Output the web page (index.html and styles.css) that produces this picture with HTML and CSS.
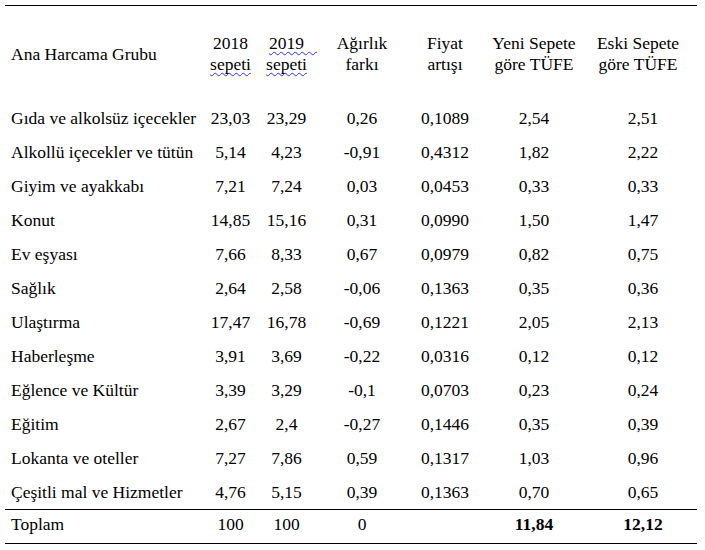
FILE: index.html
```html
<!DOCTYPE html>
<html lang="tr">
<head>
<meta charset="utf-8">
<title>TÜFE Sepet Karşılaştırması</title>
<link rel="stylesheet" href="styles.css">
</head>
<body>
<table class="cpi">
  <colgroup>
    <col class="c-name">
    <col class="c-2018">
    <col class="c-2019">
    <col class="c-diff">
    <col class="c-price">
    <col class="c-new">
    <col class="c-old">
  </colgroup>
  <thead>
    <tr>
      <th class="name">Ana Harcama Grubu</th>
      <th>2018<br><span class="spell">sepeti</span></th>
      <th><span class="spell">2019<span class="tail">&nbsp;&nbsp;&nbsp;</span></span><br><span class="spell">sepeti</span></th>
      <th>Ağırlık<br>farkı</th>
      <th>Fiyat<br>artışı</th>
      <th>Yeni Sepete<br>göre TÜFE</th>
      <th class="last">Eski Sepete<br>göre TÜFE</th>
    </tr>
  </thead>
  <tbody>
    <tr><td class="name">Gıda ve alkolsüz içecekler</td><td>23,03</td><td>23,29</td><td>0,26</td><td>0,1089</td><td>2,54</td><td class="last">2,51</td></tr>
    <tr><td class="name">Alkollü içecekler ve tütün</td><td>5,14</td><td>4,23</td><td>-0,91</td><td>0,4312</td><td>1,82</td><td class="last">2,22</td></tr>
    <tr><td class="name">Giyim ve ayakkabı</td><td>7,21</td><td>7,24</td><td>0,03</td><td>0,0453</td><td>0,33</td><td class="last">0,33</td></tr>
    <tr><td class="name">Konut</td><td>14,85</td><td>15,16</td><td>0,31</td><td>0,0990</td><td>1,50</td><td class="last">1,47</td></tr>
    <tr><td class="name">Ev eşyası</td><td>7,66</td><td>8,33</td><td>0,67</td><td>0,0979</td><td>0,82</td><td class="last">0,75</td></tr>
    <tr><td class="name">Sağlık</td><td>2,64</td><td>2,58</td><td>-0,06</td><td>0,1363</td><td>0,35</td><td class="last">0,36</td></tr>
    <tr><td class="name">Ulaştırma</td><td>17,47</td><td>16,78</td><td>-0,69</td><td>0,1221</td><td>2,05</td><td class="last">2,13</td></tr>
    <tr><td class="name">Haberleşme</td><td>3,91</td><td>3,69</td><td>-0,22</td><td>0,0316</td><td>0,12</td><td class="last">0,12</td></tr>
    <tr><td class="name">Eğlence ve Kültür</td><td>3,39</td><td>3,29</td><td>-0,1</td><td>0,0703</td><td>0,23</td><td class="last">0,24</td></tr>
    <tr><td class="name">Eğitim</td><td>2,67</td><td>2,4</td><td>-0,27</td><td>0,1446</td><td>0,35</td><td class="last">0,39</td></tr>
    <tr><td class="name">Lokanta ve oteller</td><td>7,27</td><td>7,86</td><td>0,59</td><td>0,1317</td><td>1,03</td><td class="last">0,96</td></tr>
    <tr><td class="name">Çeşitli mal ve Hizmetler</td><td>4,76</td><td>5,15</td><td>0,39</td><td>0,1363</td><td>0,70</td><td class="last">0,65</td></tr>
  </tbody>
  <tfoot>
    <tr><td class="name">Toplam</td><td>100</td><td>100</td><td>0</td><td></td><td class="bold">11,84</td><td class="last bold">12,12</td></tr>
  </tfoot>
</table>
</body>
</html>
```
FILE: styles.css
```css
html, body {
  margin: 0;
  padding: 0;
  background: #fff;
}

.cpi {
  border-collapse: collapse;
  table-layout: fixed;
  width: 692px;
  margin: 5px 0 0 5px;
  font-family: "Liberation Serif", "Times New Roman", serif;
  font-size: 17.5px;
  color: #000;
}

.c-name { width: 200px; }
.c-2018 { width: 51px; }
.c-2019 { width: 61px; }
.c-diff { width: 90px; }
.c-price { width: 76px; }
.c-new { width: 102px; }
.c-old { width: 112px; }

.cpi th,
.cpi td {
  padding: 0;
  text-align: center;
  vertical-align: middle;
  white-space: nowrap;
}

.cpi thead th {
  box-sizing: border-box;
  height: 95px;
  padding-top: 2px;
  line-height: 21px;
  font-weight: normal;
  border-top: 1px solid #000;
}

.cpi thead th.last {
  padding-right: 6px;
}

.cpi .name {
  text-align: left;
  padding-left: 6px;
}

.cpi tbody td {
  height: 34px;
  line-height: 20px;
}

.cpi tbody td.last,
.cpi tfoot td.last {
  padding-left: 4px;
}

.cpi tfoot td {
  border-top: 1px solid #000;
  border-bottom: 1px solid #000;
  height: 34px;
  line-height: 26px;
  padding-bottom: 4px;
  box-sizing: border-box;
}

.cpi .bold {
  font-weight: bold;
}

.spell {
  text-decoration: underline wavy #2b2bff;
  text-decoration-thickness: 1px;
  text-underline-offset: 2px;
  text-decoration-skip-ink: none;
}

.tail {
  margin-right: -13px;
}
```
